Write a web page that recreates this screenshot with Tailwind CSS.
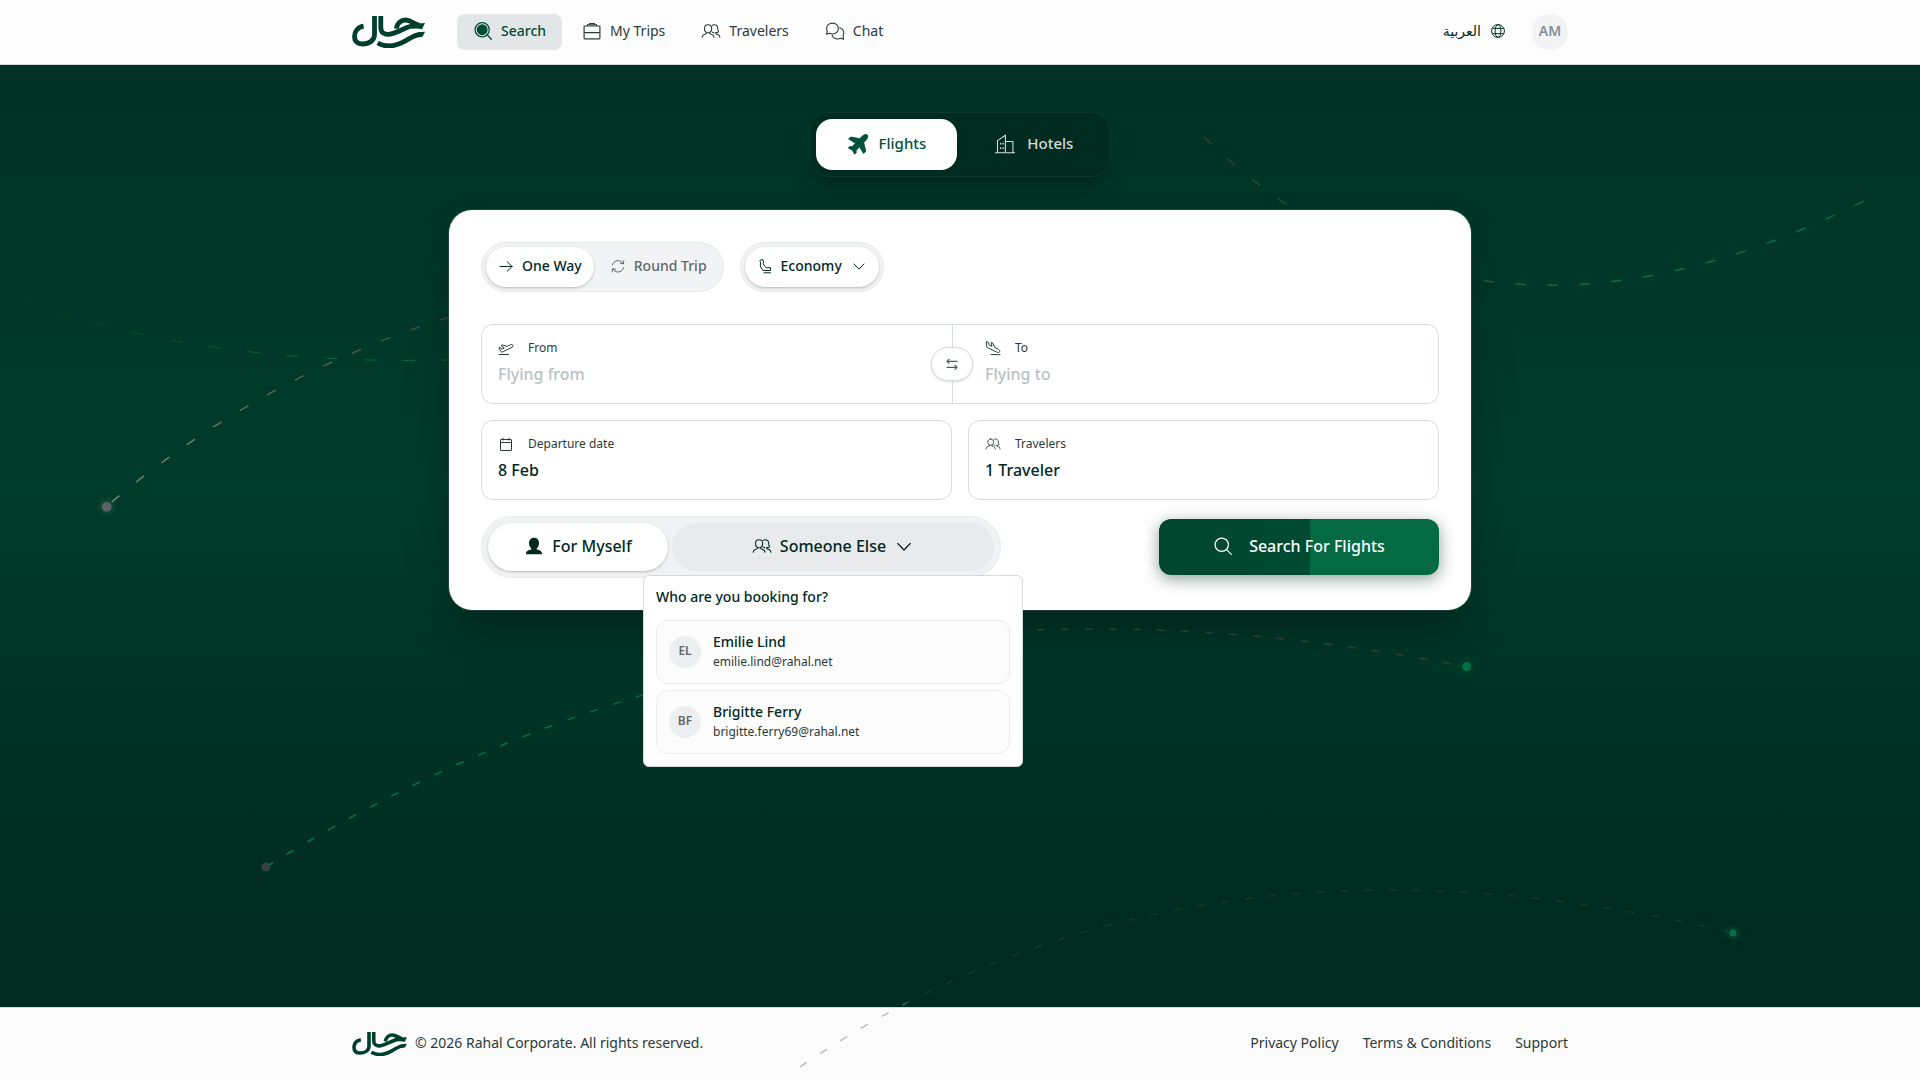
<!DOCTYPE html>
<html lang="en">
<head>
    <meta charset="UTF-8">
    <meta name="viewport" content="width=device-width, initial-scale=1.0">
    <title>Rahal Corporate</title>
    <script src="https://cdn.jsdelivr.net/npm/@tailwindcss/browser@4"></script>
</head>
<body class="relative flex min-h-screen flex-col overflow-x-hidden bg-[#fbfbfb] font-['Noto_Sans','DejaVu_Sans',sans-serif] text-sm text-[#2b3a39]">
    <!-- Icon sprite -->
    <svg class="hidden" xmlns="http://www.w3.org/2000/svg">
        <symbol id="logo" viewBox="0 0 73 32">
            <g fill="none" stroke="#003e2c" stroke-width="4.8">
                <path d="M22.5 0V18.5C22.5 24.5 17 28 10.5 28C5.2 28 2.5 25.3 2.5 20.8C2.5 15.4 5.8 11.2 11.6 10.2"/>
                <path d="M28.8 0V11.5C28.8 16.6 32.5 19.3 38 18.2C47.5 16.2 55 9.9 64 9.2"/>
                <path d="M44.2 12.6C45.2 7.4 49 4 53.5 4C59.5 4 61.5 8.4 67 9"/>
                <path d="M25.6 27C33 31.2 43 30.8 53 25.2C59 21.7 62.5 19 68 18.4"/>
            </g>
            <path fill="#003e2c" d="M63 6.5C66 7.6 69 7.2 73 7L70 13.2C67 12.4 63.5 12.2 60 13ZM66 16.2L73 15.8L70.5 20.7L65 21.4Z"/>
        </symbol>
        <symbol id="i-search-solid" viewBox="0 0 24 24" fill="none" stroke="currentColor" stroke-width="1.500">
            <circle cx="11" cy="10.500" r="8.500"/><circle cx="11" cy="10.500" r="5.800" fill="currentColor"/><path d="M17 16.500L22.500 22.500"/>
        </symbol>
        <symbol id="i-search" viewBox="0 0 24 24" fill="none" stroke="currentColor" stroke-width="1.500" stroke-linecap="round">
            <circle cx="10.500" cy="10.500" r="8"/><path d="M16.300 16.300L22 22"/>
        </symbol>
        <symbol id="i-case" viewBox="0 0 24 24" fill="none" stroke="currentColor" stroke-width="1.400" stroke-linejoin="round">
            <rect x="2.500" y="6" width="19" height="15.500" rx="1"/><path d="M2.500 14H21.500M6.500 6V4.500H17.500V6M9 4.500V3H15V4.500"/>
        </symbol>
        <symbol id="i-users" viewBox="0 0 24 24" fill="none" stroke="currentColor" stroke-width="1.300" stroke-linecap="round" stroke-linejoin="round">
            <path d="M8.500 4.500C5.700 4.500 4.200 6.500 4.200 9C4.200 11.500 5.500 14 8.500 14C11.500 14 12.800 11.500 12.800 9C12.800 6.500 11.300 4.500 8.500 4.500ZM1.500 19.500C1.500 17 3 16 6.300 15.200V13.300M15.500 19.500C15.500 17 14 16 10.700 15.200V13.300"/>
            <path d="M13.500 5.200C14.200 4.700 15 4.500 15.800 4.500C18.600 4.500 20 6.500 20 8.500C20 10.500 20.500 12 21 13C20 13.700 19 13.900 17.700 13.900V15.300C21 16 22.600 17 22.600 19.500M13.500 13.300C14.100 13.700 14.800 13.900 15.500 13.900"/>
        </symbol>
        <symbol id="i-chat" viewBox="0 0 24 24" fill="none" stroke="currentColor" stroke-width="1.300" stroke-linecap="round" stroke-linejoin="round">
            <path d="M9 2.500C13 2.500 16 5.400 16 9C16 12.600 13 15.500 9 15.500C7.800 15.500 6.700 15.200 5.700 14.700L1.800 16L2.800 12.300C2.200 11.300 1.900 10.200 1.900 9C1.900 5.400 5 2.500 9 2.500Z"/>
            <path d="M17.800 8C20.600 9 22.500 11.500 22.500 14.300C22.500 15.500 22.200 16.600 21.600 17.600L22.300 21.800L18.400 20.700C17.400 21.200 16.400 21.500 15.200 21.500C12 21.500 9.300 19.800 8.500 17"/>
        </symbol>
        <symbol id="i-globe" viewBox="0 0 24 24" fill="none" stroke="currentColor" stroke-width="1.700">
            <circle cx="12" cy="12" r="11"/><ellipse cx="12" cy="12" rx="5" ry="11"/><path d="M2.500 7.500H21.500M2.500 16.500H21.500"/>
        </symbol>
        <symbol id="i-plane" viewBox="0 0 24 24" fill="currentColor" stroke="currentColor" stroke-linejoin="round">
            <path d="M17.200 3C19 1.500 21.400 1.300 22.300 2.200C23 3 22.600 5.500 21.200 7L18.200 10.500L20.500 20L18 22.300L13.800 15.200L9.800 19L10 21.500L8.300 23L5.800 18.800L1.500 16.300L2.800 14.900L5.800 14.800L9.300 11L1.800 6.600L4 4.400L13.800 6.200Z"/>
        </symbol>
        <symbol id="i-hotel" viewBox="0 0 24 24" fill="none" stroke="currentColor" stroke-width="1.300">
            <path d="M0 22.500H24M3 22.500V8L12.500 1.500V22.500M12.500 9H21.500V22.500"/>
            <path d="M6 11.500H7.500M9 11.500H10.500M6 17H7.500M9 17H10.500" stroke-width="2.200"/>
        </symbol>
        <symbol id="i-arrow" viewBox="0 0 16 16" fill="none" stroke="currentColor" stroke-linecap="round" stroke-linejoin="round">
            <path d="M2 8.500H14M9.300 3.800L14 8.500L9.300 13.200"/>
        </symbol>
        <symbol id="i-round" viewBox="0 0 16 16" fill="none" stroke="currentColor" stroke-linecap="round" stroke-linejoin="round">
            <path d="M2.300 7C3 4.200 5.300 2.600 8 2.600C10.200 2.600 12.200 3.700 13.200 5.600M13.800 2.600L13.300 5.800L10.300 5.300M13.700 9.500C13 12.300 10.700 14 8 14C5.800 14 3.800 12.800 2.800 11M2.200 14L2.700 10.800L5.700 11.300"/>
        </symbol>
        <symbol id="i-seat" viewBox="0 0 16 16" fill="none" stroke="currentColor" stroke-linecap="round" stroke-linejoin="round">
            <path d="M5.200 1.800C4 1.300 2.800 2 3.100 3.200L3.500 4.600L3.300 8L5.200 11.600C5.700 12.300 6.100 12.500 7 12.500H13.500V9.700H9.300L7.400 7.800L6.200 5.600L6.500 3.200C6.500 2.500 6.100 2.100 5.200 1.800ZM7 14.800H13.500"/>
        </symbol>
        <symbol id="i-chevron" viewBox="0 0 16 16" fill="none" stroke="currentColor" stroke-linecap="round" stroke-linejoin="round">
            <path d="M3 6L8 11.200L13 6"/>
        </symbol>
        <symbol id="i-takeoff" viewBox="0 0 16 16" fill="none" stroke="currentColor" stroke-linecap="round" stroke-linejoin="round">
            <path d="M1 14.500H10.500M1.200 8L2.600 11.300C3 12 3.800 12.300 4.600 12L14 7.300C15.200 6.600 15.300 5.300 14.500 4.800C13.500 4.300 12.500 4.600 11.500 5.100L9 6.400L4.300 4.900L3 5.600L6.200 8L3.700 9.200L2.200 7.500Z"/>
        </symbol>
        <symbol id="i-landing" viewBox="0 0 16 16" fill="none" stroke="currentColor" stroke-linecap="round" stroke-linejoin="round">
            <path d="M6 14.600H15M1.300 2L1.600 6.200C1.700 7 2.100 7.400 2.800 7.800L11.800 12.100C13.200 12.700 14.400 12.600 14.700 11.700C15 10.500 14.200 9.700 13.200 9.200L10.400 8L7.600 2.900L6.200 2.500L7 6.400L4.300 5.100L3.500 2.800Z"/>
        </symbol>
        <symbol id="i-swap" viewBox="0 0 16 16" fill="none" stroke="currentColor" stroke-width="1.200" stroke-linecap="round" stroke-linejoin="round">
            <path d="M13 5.300H3M5 3.300L3 5.300L5 7.300M3 11.300H13M11 9.300L13 11.300L11 13.300"/>
        </symbol>
        <symbol id="i-calendar" viewBox="0 0 16 16" fill="none" stroke="currentColor">
            <rect x="2.500" y="3.500" width="11" height="11" rx=".5"/><path d="M2.500 6.500H13.500M5 1.800V4.500M11 1.800V4.500"/>
        </symbol>
        <symbol id="i-person" viewBox="0 0 24 24" fill="currentColor">
            <path d="M12 2C15.600 2 18 4.500 18 8.500C18 11.500 16.900 13.700 15.200 15V16.200C19.500 17 21.500 18 21.700 22H2.300C2.500 18 4.500 17 8.800 16.200V15C7.100 13.700 6 11.500 6 8.500C6 4.500 8.400 2 12 2Z"/>
        </symbol>
    </svg>

    <!-- Header -->
    <header class="h-[65px] border-b border-[#d5dadb] bg-[#fdfdfd]">
        <div class="mx-auto flex h-16 max-w-7xl items-center px-8">
            <a href="#" aria-label="Rahal"><svg class="h-8 w-[73px]"><use href="#logo"/></svg></a>
            <nav class="ml-8 flex items-center gap-1">
                <a href="#" class="flex h-9 items-center gap-2 rounded-lg bg-[#e3e6e7] px-4 pb-0.5 font-medium text-[#004d35]"><svg class="size-5"><use href="#i-search-solid"/></svg>Search</a>
                <a href="#" class="flex h-9 items-center gap-2 rounded-lg px-4 pb-0.5"><svg class="size-5"><use href="#i-case"/></svg>My Trips</a>
                <a href="#" class="flex h-9 items-center gap-2 rounded-lg px-4 pb-0.5"><svg class="size-5"><use href="#i-users"/></svg>Travelers</a>
                <a href="#" class="flex h-9 items-center gap-2 rounded-lg px-4 pb-0.5"><svg class="size-5"><use href="#i-chat"/></svg>Chat</a>
            </nav>
            <div class="ml-auto flex items-center gap-[27px]">
                <button type="button" class="flex h-9 items-center gap-2.5 pb-0.5 font-medium text-[#003023]"><span lang="ar">العربية</span><svg class="size-3.5"><use href="#i-globe"/></svg></button>
                <button type="button" class="flex size-9 items-center justify-center rounded-full bg-[#f1f3f4] pb-0.5 font-semibold text-[#868e93]">AM</button>
            </div>
        </div>
    </header>

    <!-- Hero -->
    <main class="flex-1 bg-linear-to-b from-[#003325] via-[#003c2a] via-45% to-[#002b20] to-92% px-4 pt-[47px] pb-12">
        <div class="relative z-10 mx-auto flex w-fit rounded-[20px] border border-white/6 bg-[#002b20] p-1.5 text-[15px] font-medium shadow-xl shadow-black/15">
            <button type="button" class="flex h-[51px] items-center gap-2.5 rounded-2xl bg-white px-[31px] pb-0.5 text-[#00513a]"><svg class="size-[22px]"><use href="#i-plane"/></svg>Flights</button>
            <button type="button" class="flex h-[51px] items-center gap-3 rounded-2xl pr-[31px] pb-0.5 pl-[38px] text-[#d5dadb]"><svg class="size-5"><use href="#i-hotel"/></svg>Hotels</button>
        </div>

        <!-- Search card -->
        <form class="relative z-10 mx-auto mt-8 max-w-5xl rounded-3xl border border-white/10 bg-white bg-clip-padding p-8 text-[#00291f] shadow-2xl shadow-black/40">
            <div class="flex gap-4 font-medium">
                <div class="flex gap-1 rounded-full border border-[#e6e9ea] bg-[#f2f3f4] p-1">
                    <button type="button" class="flex h-10 items-center gap-2 rounded-full bg-white px-3 pb-0.5 shadow-sm shadow-black/20"><svg class="size-4"><use href="#i-arrow"/></svg>One Way</button>
                    <button type="button" class="flex h-10 items-center gap-2 rounded-full px-3 pb-0.5 text-[#5f696d]"><svg class="size-4"><use href="#i-round"/></svg>Round Trip</button>
                </div>
                <div class="flex rounded-full border border-[#e6e9ea] bg-[#f2f3f4] p-1">
                    <div class="flex h-10 items-center gap-2 rounded-full bg-white px-3 pb-0.5 shadow-sm shadow-black/20">
                        <label for="cabin" aria-label="Cabin class"><svg class="size-4"><use href="#i-seat"/></svg></label>
                        <select id="cabin" class="appearance-none">
                            <option>Economy</option>
                        </select>
                        <svg class="size-4"><use href="#i-chevron"/></svg>
                    </div>
                </div>
            </div>

            <!-- The divider lines up with the right edge of the date box below -->
            <div class="mt-8 flex h-20 rounded-xl border border-[#d5dadb]">
                <div class="relative w-[calc(50%-7px)] border-r border-[#d5dadb] px-4 pt-[11px]">
                    <label for="from" class="flex h-6 items-center gap-3.5 text-xs text-[#2b3a39]"><svg class="size-4"><use href="#i-takeoff"/></svg>From</label>
                    <input id="from" type="text" placeholder="Flying from" class="block h-7 w-full text-base font-medium outline-none placeholder:text-[#b9c2c3]">
                    <button type="button" aria-label="Swap" class="absolute top-1/2 right-0 z-10 flex h-[34px] w-[42px] translate-x-1/2 -translate-y-1/2 items-center justify-center rounded-full border border-[#d5dadb] bg-white text-[#4f5a5e] shadow-sm"><svg class="size-4"><use href="#i-swap"/></svg></button>
                </div>
                <div class="flex-1 pt-[11px] pr-4 pl-8">
                    <label for="to" class="flex h-6 items-center gap-3.5 text-xs text-[#2b3a39]"><svg class="size-4"><use href="#i-landing"/></svg>To</label>
                    <input id="to" type="text" placeholder="Flying to" class="block h-7 w-full text-base font-medium outline-none placeholder:text-[#b9c2c3]">
                </div>
            </div>

            <div class="mt-4 grid grid-cols-2 gap-4">
                <div class="h-20 rounded-xl border border-[#d5dadb] px-4 pt-[11px]">
                    <label for="date" class="flex h-6 items-center gap-3.5 text-xs text-[#2b3a39]"><svg class="size-4"><use href="#i-calendar"/></svg>Departure date</label>
                    <input id="date" type="text" readonly value="8 Feb" class="block h-7 w-full text-base font-medium outline-none">
                </div>
                <div class="h-20 rounded-xl border border-[#d5dadb] px-4 pt-[11px]">
                    <label for="pax" class="flex h-6 items-center gap-3.5 text-xs text-[#2b3a39]"><svg class="size-4"><use href="#i-users"/></svg>Travelers</label>
                    <input id="pax" type="text" readonly value="1 Traveler" class="block h-7 w-full text-base font-medium outline-none">
                </div>
            </div>

            <div class="mt-4 flex items-center justify-between text-base font-medium">
                <div class="flex gap-1 rounded-full border border-[#e8ebec] bg-[#f1f2f4] p-1.5">
                    <button type="button" class="flex h-12 w-[180px] items-center justify-center gap-2 rounded-full bg-white pb-0.5 shadow-sm shadow-black/20"><svg class="size-5"><use href="#i-person"/></svg>For Myself</button>
                    <div class="relative">
                        <button type="button" aria-expanded="true" class="flex h-12 w-[322px] items-center justify-center gap-2 rounded-full bg-[#e8eaec] pb-0.5"><svg class="size-5"><use href="#i-users"/></svg>Someone Else<svg class="size-5"><use href="#i-chevron"/></svg></button>
                        <!-- Booking popover -->
                        <div class="absolute top-full left-1/2 mt-1 w-[380px] -translate-x-1/2 rounded-md border border-[#d5dadb] bg-white p-3 text-sm">
                            <p class="mb-3 h-5 leading-[18px]">Who are you booking for?</p>
                            <div class="flex flex-col gap-1.5">
                                <button type="button" class="flex h-16 items-center gap-3 rounded-xl border border-[#ebeded] bg-[#fcfcfc] px-3 text-left">
                                    <span class="flex size-8 items-center justify-center rounded-full bg-[#eceef0] pb-0.5 text-xs font-semibold text-[#5f696d]">EL</span>
                                    <span class="flex flex-col"><span>Emilie Lind</span><span class="text-xs leading-5 font-normal text-[#2b3a39]">emilie.lind@rahal.net</span></span>
                                </button>
                                <button type="button" class="flex h-16 items-center gap-3 rounded-xl border border-[#ebeded] bg-[#fcfcfc] px-3 text-left">
                                    <span class="flex size-8 items-center justify-center rounded-full bg-[#eceef0] pb-0.5 text-xs font-semibold text-[#5f696d]">BF</span>
                                    <span class="flex flex-col"><span>Brigitte Ferry</span><span class="text-xs leading-5 font-normal text-[#2b3a39]">brigitte.ferry69@rahal.net</span></span>
                                </button>
                            </div>
                        </div>
                    </div>
                </div>
                <button type="submit" class="flex h-14 w-[280px] items-center justify-center gap-4 rounded-xl bg-linear-to-r from-[#00472f] from-0% via-[#004a32] via-54% to-[#046a43] to-54% pb-0.5 text-white shadow-[0_4px_16px_rgba(0,41,31,0.45)]"><svg class="size-5"><use href="#i-search"/></svg>Search For Flights</button>
            </div>
        </form>
    </main>

    <!-- Footer -->
    <footer class="border-t border-[#d5dadb]">
        <div class="mx-auto flex max-w-7xl items-center px-8 py-6">
            <svg class="h-6 w-[55px]"><use href="#logo"/></svg>
            <p class="ml-2 pb-0.5">© 2026 Rahal Corporate. All rights reserved.</p>
            <nav class="ml-auto flex gap-6 pb-0.5">
                <a href="#">Privacy Policy</a>
                <a href="#">Terms &amp; Conditions</a>
                <a href="#">Support</a>
            </nav>
        </div>
    </footer>

    <!-- Flight routes -->
    <svg class="pointer-events-none absolute inset-0 h-full w-full" viewBox="0 0 1920 1080" preserveAspectRatio="xMidYMid slice" fill="none">
        <defs>
            <linearGradient id="g1" gradientUnits="userSpaceOnUse" x1="1200" y1="0" x2="1560" y2="0"><stop stop-color="#333f3a"/><stop offset="1" stop-color="#04704a"/></linearGradient>
            <linearGradient id="g2" gradientUnits="userSpaceOnUse" x1="266" y1="0" x2="1467" y2="0"><stop stop-color="#04784a"/><stop offset=".3" stop-color="#066b47"/><stop offset=".8" stop-color="#334540"/><stop offset="1" stop-color="#333f3a"/></linearGradient>
            <linearGradient id="g3" gradientUnits="userSpaceOnUse" x1="106" y1="0" x2="450" y2="0"><stop stop-color="#7b8482"/><stop offset="1" stop-color="#38443f"/></linearGradient>
            <linearGradient id="g4" gradientUnits="userSpaceOnUse" x1="20" y1="0" x2="300" y2="0"><stop stop-color="#003c2a"/><stop offset="1" stop-color="#046842"/></linearGradient>
            <linearGradient id="g5" gradientUnits="userSpaceOnUse" x1="895" y1="0" x2="910" y2="0"><stop stop-color="#b3bdba"/><stop offset="1" stop-color="#044030"/></linearGradient>
        </defs>
        <path d="M111.700 502Q275 365 480 308" stroke="url(#g3)" stroke-width="1.500" stroke-dasharray="10 21.500"/>
        <path d="M1204 137Q1472 397 1864 201" stroke="url(#g1)" stroke-width="1.500" stroke-dasharray="10 22"/>
        <path d="M20 300Q205 366 450 360" stroke="url(#g4)" stroke-dasharray="12 27"/>
        <path d="M266 867Q800 534 1467 667" stroke="url(#g2)" stroke-width="1.500" stroke-dasharray="8 16"/>
        <path d="M800 1067Q1185 803 1733 933" stroke="url(#g5)" stroke-width="1.500" stroke-dasharray="8 16"/>
        <circle cx="106.700" cy="506.700" r="9" fill="#fff" fill-opacity=".04"/>
        <circle cx="106.700" cy="506.700" r="5" fill="#56635f"/>
        <circle cx="266" cy="867" r="4.500" fill="#33443e"/>
        <circle cx="1466.600" cy="666.600" r="9" fill="#04784a" fill-opacity=".1"/>
        <circle cx="1466.600" cy="666.600" r="4.500" fill="#047048"/>
        <circle cx="1733" cy="933" r="8" fill="#04784a" fill-opacity=".15"/>
        <circle cx="1733" cy="933" r="3.500" fill="#047048"/>
    </svg>
</body>
</html>
